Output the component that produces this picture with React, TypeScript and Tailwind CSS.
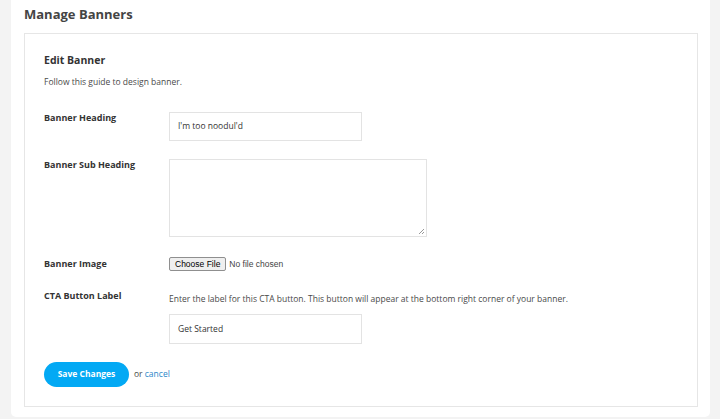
const Label = ({ children }: { children: React.ReactNode }) => (
  <div className="w-[125px] shrink-0 text-[9px] font-bold text-[#333] leading-[12px]">{children}</div>
);

export default function App() {
  return (
    <div className="h-[419px] w-full bg-[#f3f3f3] font-['Open_Sans',sans-serif]">
      <div className="ml-[11px] mr-[10px] h-[417px] rounded-b-[5px] bg-white pl-[13px] pr-[12px]">
        <h1 className="pt-[5px] text-[13px] font-bold leading-[18px] text-[#444]">Manage Banners</h1>
        <div className="mt-[10px] h-[374px] border border-[#e6e6e6] px-[19px]">
          <h2 className="mt-[18px] text-[10.5px] font-bold leading-[16px] text-[#333]">Edit Banner</h2>
          <p className="mt-[7px] text-[8.5px] leading-[14px] text-[#4a4a4a]">Follow this guide to design banner.</p>

          <div className="mt-[23px] flex">
            <Label>Banner Heading</Label>
            <div className="flex h-[29px] w-[193px] items-center border border-[#e3e3e3] px-[8px] text-[8.5px] text-[#333]">
              I'm too noodul'd
            </div>
          </div>

          <div className="mt-[18px] flex">
            <Label>Banner Sub Heading</Label>
            <div className="relative h-[78px] w-[258px] border border-[#e3e3e3]">
              <svg className="absolute bottom-[1px] right-[1px]" width="7" height="7" viewBox="0 0 7 7">
                <path d="M6 1L1 6M6 4L4 6" stroke="#999" strokeWidth="1" />
              </svg>
            </div>
          </div>

          <div className="mt-[20px] flex items-center">
            <Label>Banner Image</Label>
            <div className="flex items-center text-[8.5px] font-['Liberation_Sans',sans-serif]">
              <span className="rounded-[2px] border border-[#8f8f8f] bg-[#efefef] px-[5px] leading-[12px] text-black">Choose File</span>
              <span className="ml-[3px] text-[#444]">No file chosen</span>
            </div>
          </div>

          <div className="mt-[19px] flex">
            <Label>CTA Button Label</Label>
            <div>
              <p className="pt-[3px] text-[8.5px] leading-[12px] text-[#4a4a4a]">
                Enter the label for this CTA button. This button will appear at the bottom right corner of your banner.
              </p>
              <div className="mt-[9px] flex h-[30px] w-[193px] items-center border border-[#e3e3e3] px-[8px] text-[8.5px] text-[#333]">
                Get Started
              </div>
            </div>
          </div>

          <div className="mt-[18px] flex items-center">
            <button className="h-[25px] w-[85px] rounded-full bg-[#03a9f4] text-[8.5px] font-bold text-white">Save Changes</button>
            <span className="ml-[5px] text-[8.5px] text-[#4a4a4a]">
              or <a className="text-[#2a86c8]">cancel</a>
            </span>
          </div>
        </div>
      </div>
    </div>
  );
}
